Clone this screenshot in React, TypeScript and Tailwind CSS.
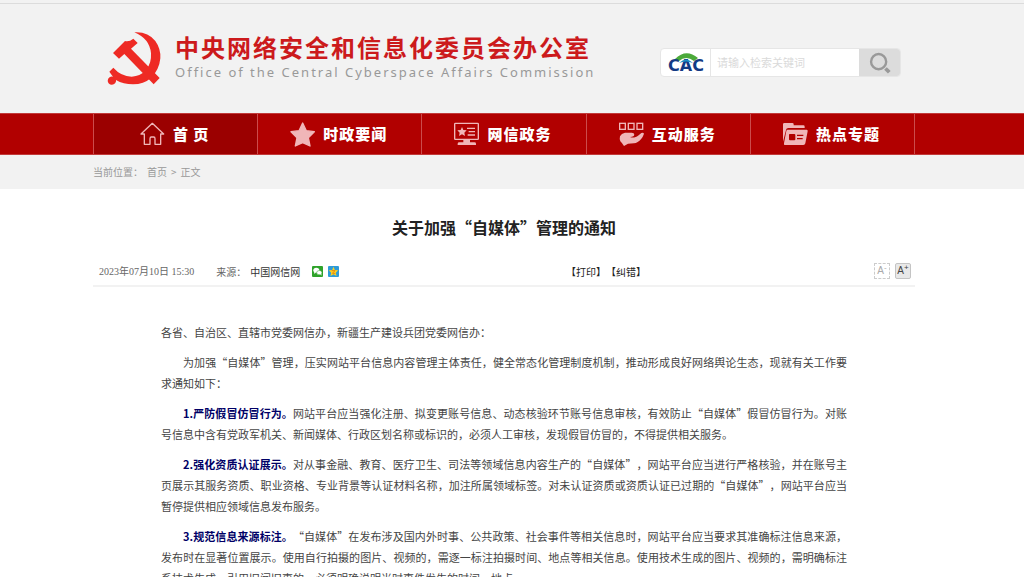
import React from "react";

const HomeIcon = () => (
  <svg viewBox="0 0 75 75" className="h-[25px] w-[25px]" fill="none" stroke="currentColor" strokeWidth="4" strokeLinejoin="round" strokeLinecap="round">
    <path d="M13 36v31h17V50q0-5 4-5h7q4 0 4 5v17h17V36h9L37 4 3 36z" />
  </svg>
);

const StarIcon = () => (
  <svg viewBox="0 0 75 75" className="h-[25px] w-[25px]" fill="currentColor" stroke="currentColor" strokeWidth="4" strokeLinejoin="round">
    <path d="M38 3l11 23 24 3-18 18 5 25-22-10-22 10 5-25L3 29l24-3z" />
  </svg>
);

const MonitorIcon = () => (
  <svg viewBox="0 0 75 75" className="h-[25px] w-[25px]" fill="currentColor">
    <rect x="2" y="4" width="71" height="48" rx="2" fill="none" stroke="currentColor" strokeWidth="4" />
    <path d="M24 15l4 9 10 1-7 7 2 10-9-5-9 5 2-10-7-7 10-1z" />
    <path d="M39 17h24v4H39zM44 27h19v4H44zM41 37h22v4H41z" />
    <path d="M28 54h20v7h13q5 0 5 4v4H11v-4q0-4 5-4h12z" />
  </svg>
);

const HandIcon = () => (
  <svg viewBox="0 0 75 75" className="h-[25px] w-[25px]" fill="currentColor">
    <g fill="none" stroke="currentColor" strokeWidth="4">
      <rect x="2" y="4" width="17" height="18" />
      <rect x="28" y="4" width="17" height="18" />
      <rect x="54" y="4" width="17" height="18" />
    </g>
    <path d="M3 43q4-9 15-11h20q8 0 8 6 0 4-7 6l-6 1q8 3 15 1 6-2 11-6l8-7q6-2 8 2-3 9-8 15-11 13-22 14l-18 1-12 7q-5-8-11-14Q1 50 3 43z" />
  </svg>
);

const FolderIcon = () => (
  <svg viewBox="0 0 75 75" className="h-[25px] w-[25px]" fill="currentColor">
    <path d="M0 7q0-4 4-4h24q4 0 4 4v3h29q4 0 4 4v4H16q-6 0-7 6L0 59z" />
    <path fillRule="evenodd" d="M14 23h57q4 0 3 5l-7 36q-1 5-6 5H5q-3 0-2-5l7-37q1-4 4-4zm6 13q-2 0-2 3v13q0 3 3 3h13q3 0 3-3V39q0-3-3-3zm22 2v4h19v-4zm0 10v4h17v-4z" />
  </svg>
);

const navItems = [
  { label: "首 页", Icon: HomeIcon, active: true },
  { label: "时政要闻", Icon: StarIcon },
  { label: "网信政务", Icon: MonitorIcon },
  { label: "互动服务", Icon: HandIcon },
  { label: "热点专题", Icon: FolderIcon },
];

const paragraphs = [
  {
    text: "为加强“自媒体”管理，压实网站平台信息内容管理主体责任，健全常态化管理制度机制，推动形成良好网络舆论生态，现就有关工作要求通知如下：",
  },
  {
    lead: "1.严防假冒仿冒行为。",
    text: "网站平台应当强化注册、拟变更账号信息、动态核验环节账号信息审核，有效防止“自媒体”假冒仿冒行为。对账号信息中含有党政军机关、新闻媒体、行政区划名称或标识的，必须人工审核，发现假冒仿冒的，不得提供相关服务。",
  },
  {
    lead: "2.强化资质认证展示。",
    text: "对从事金融、教育、医疗卫生、司法等领域信息内容生产的“自媒体”，网站平台应当进行严格核验，并在账号主页展示其服务资质、职业资格、专业背景等认证材料名称，加注所属领域标签。对未认证资质或资质认证已过期的“自媒体”，网站平台应当暂停提供相应领域信息发布服务。",
  },
  {
    lead: "3.规范信息来源标注。",
    text: "“自媒体”在发布涉及国内外时事、公共政策、社会事件等相关信息时，网站平台应当要求其准确标注信息来源，发布时在显著位置展示。使用自行拍摄的图片、视频的，需逐一标注拍摄时间、地点等相关信息。使用技术生成的图片、视频的，需明确标注系技术生成。引用旧闻旧事的，必须明确说明当时事件发生的时间、地点。",
  },
];

const Emblem = () => (
  <svg viewBox="50 90 162 162" className="h-[54px] w-[54px]" fill="#ee2a24">
    <path d="M132 94Q172 91 195 120Q212 144 210 172Q207 206 182 231Q160 250 128 250Q99 250 77 237A12.500 12.500 0 1 1 68 227L57 212L69 200Q92 226 124 227Q150 226 167 207Q184 187 182 157Q178 113 132 94Z" />
    <path d="M68 156L104 120Q117 123 129 113L142 126L122 143L208 231L190 250L102 159L86 173Z" />
  </svg>
);

const Header = () => (
  <header className="border-t border-[#dcdcdc] pr-4">
    <div className="mx-auto flex h-[109px] w-[822px] max-w-full items-center justify-between px-[14px] pb-[2px]">
      <a href="#" className="flex items-center gap-[14px]">
        <Emblem />
        <span className="block">
          <span className="block text-[24px] leading-7 font-bold tracking-[2px] text-[#cc1a1c]">
            中央网络安全和信息化委员会办公室
          </span>
          <span className="block font-['Noto_Sans'] text-[13px] leading-[22px] tracking-[2px] whitespace-nowrap text-[#999]">
            Office of the Central Cyberspace Affairs Commission
          </span>
        </span>
      </a>
      <form className="mt-[10px] flex h-[29px] w-[241px] overflow-hidden rounded-sm border border-[#e6e6e6] bg-white">
        <div className="flex w-[50px] shrink-0 items-center justify-center border-r border-[#e6e6e6]">
          <svg viewBox="0 0 42 26" className="h-[26px] w-[42px]" role="img" aria-label="CAC">
            <path d="M10 9Q21-2 33 8L29 11Q21 5 14 11Z" fill="#4ba93a" />
            <text x="21" y="21" textAnchor="middle" fontFamily="DejaVu Sans" fontWeight="700" fontSize="16" fill="#123a84">
              CAC
            </text>
            <path d="M14 13Q21 6 28 13Q21 10 14 13Z" fill="#1d8fc4" />
          </svg>
        </div>
        <input
          type="text"
          aria-label="请输入检索关键词"
          placeholder="请输入检索关键词"
          className="min-w-0 flex-1 px-[6px] text-[11px] outline-none placeholder:text-[#dadada]"
        />
        <button type="button" aria-label="搜索" className="flex w-[41px] shrink-0 items-center justify-center bg-[#dcdcdc]">
          <svg viewBox="0 0 64 64" className="h-[22px] w-[22px]" fill="none" stroke="#999">
            <circle cx="28" cy="28" r="22" strokeWidth="7" />
            <path d="M48 48l11 11" strokeWidth="11" />
          </svg>
        </button>
      </form>
    </div>
  </header>
);

const NavBar = () => (
  <nav className="h-[42px] border-y border-[#c23a3a] bg-[#b10000] pr-4">
    <ul className="mx-auto grid h-full w-[822px] max-w-full grid-cols-5 border-r border-[#cb4b4b]">
      {navItems.map(({ label, Icon, active }) => (
        <li key={label} className="border-l border-[#cb4b4b]">
          <a
            href="#"
            className={`flex h-full items-center justify-center gap-2 pr-[2px] text-[15px] font-black tracking-[1px] whitespace-pre text-white ${active ? "bg-[#9b0000]" : ""}`}
          >
            <span className="text-[#f0b6b8]">
              <Icon />
            </span>
            {label}
          </a>
        </li>
      ))}
    </ul>
  </nav>
);

const ArticleMeta = () => (
  <div className="flex h-7 items-center justify-between border-b-2 border-[#f2f2f2] pr-1 pb-[2px] pl-[6px] text-[10px] text-[#666]">
    <div className="flex items-center">
      <time className="font-['Liberation_Serif','Noto_Sans_CJK_SC',serif]">2023年07月10日 15:30</time>
      <span className="ml-[22px]">来源：</span>
      <span className="ml-1 text-[#333]">中国网信网</span>
      <a href="#" aria-label="微信" className="ml-3">
        <svg viewBox="0 0 33 33" className="h-[11px] w-[11px]">
          <rect width="33" height="33" rx="3" fill="#2fa32b" />
          <ellipse cx="13" cy="13" rx="9" ry="7.500" fill="#fff" />
          <path d="M7 17l-1 6 6-3z" fill="#fff" />
          <ellipse cx="22" cy="20" rx="8" ry="6.500" fill="#fff" stroke="#2fa32b" strokeWidth="1.500" />
          <path d="M25 25l3 4 0-6z" fill="#fff" />
        </svg>
      </a>
      <a href="#" aria-label="QQ空间" className="ml-[5px]">
        <svg viewBox="0 0 33 33" className="h-[11px] w-[11px]">
          <rect width="33" height="33" rx="3" fill="#2f9bd8" />
          <path d="M16.500 2l4 10 10 1-7 7 2 10-9-5-9 5 2-10-7-7 10-1z" fill="#ffd21f" />
          <path d="M11 14h10l-8 8h9" fill="none" stroke="#e07a10" strokeWidth="2.500" />
        </svg>
      </a>
    </div>
    <div className="flex items-center">
      <div className="mr-[228px] text-[#222]">
        <button type="button">【打印】</button>
        <button type="button">【纠错】</button>
      </div>
      <div className="flex gap-[5px] font-['Liberation_Sans'] leading-none">
        <button type="button" className="h-4 w-4 border border-dashed border-[#ccc] text-[#aaa]">
          A<sup className="text-[8px]">-</sup>
        </button>
        <button type="button" className="h-4 w-4 rounded-[2px] border border-[#c4c4c4] bg-[#e8e8e8] text-[#444]">
          A<sup className="text-[8px]">+</sup>
        </button>
      </div>
    </div>
  </div>
);

const App = () => {
  return (
    <div
      lang="zh-CN"
      className="h-screen overflow-y-auto bg-white font-['Noto_Sans_CJK_SC',sans-serif] [scrollbar-width:none] [text-spacing-trim:space-all]"
    >
      <div className="bg-[#f2f2f2] pt-[3px]">
        <Header />
        <NavBar />
        <div className="pr-4">
          <div className="mx-auto flex h-[34px] w-[822px] max-w-full items-center gap-1 pb-[2px] text-[10px] text-[#999]">
            <span>当前位置：</span>
            <a href="#">首页</a>
            <span>&gt;</span>
            <a href="#">正文</a>
          </div>
        </div>
      </div>
      <main className="pr-4">
        <article className="mx-auto w-[822px] max-w-full">
          <h1 className="pt-[26px] text-center text-base leading-6 font-bold text-[#222]">
            关于加强“自媒体”管理的通知
          </h1>
          <div className="mt-5">
            <ArticleMeta />
          </div>
          <div className="mt-[35px] space-y-[9px] px-17 text-justify text-[11px] leading-[21px] text-[#444]">
            <p>各省、自治区、直辖市党委网信办，新疆生产建设兵团党委网信办：</p>
            {paragraphs.map(({ lead, text }) => (
              <p key={text} className="indent-[22px]">
                {lead && <strong className="text-[#000066]">{lead}</strong>}
                {text}
              </p>
            ))}
          </div>
        </article>
      </main>
    </div>
  );
};

export default App;
